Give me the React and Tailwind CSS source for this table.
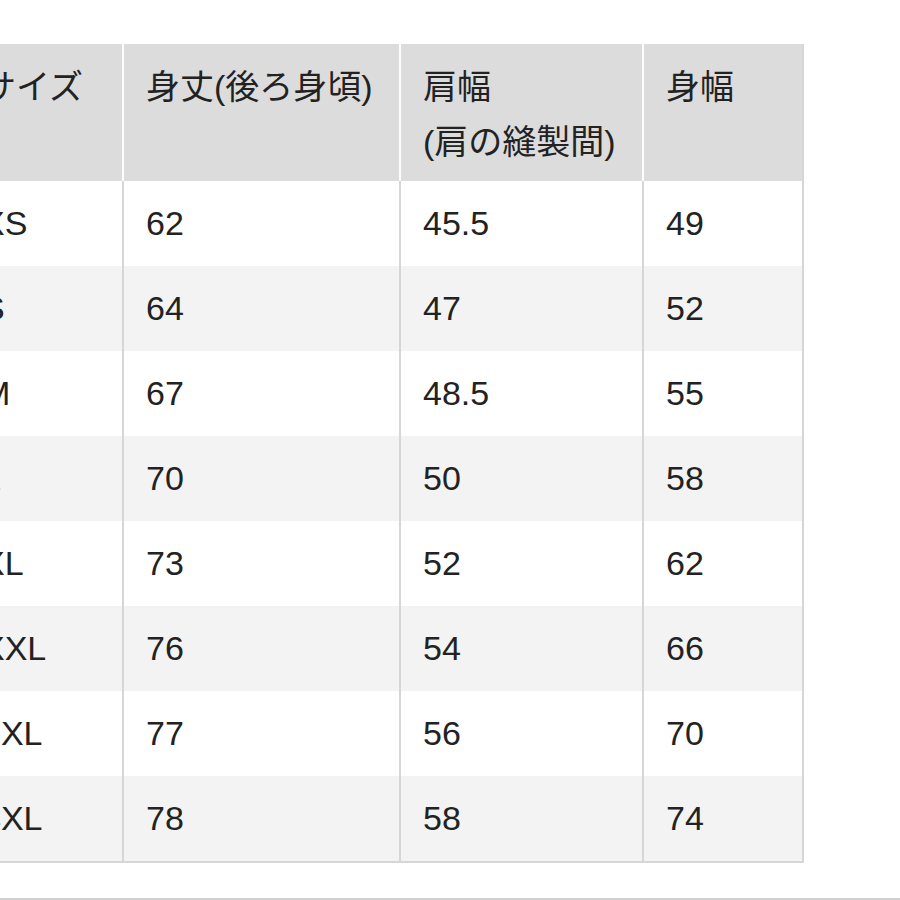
const headers = [
  ["サイズ"],
  ["身丈(後ろ身頃)"],
  ["肩幅", "(肩の縫製間)"],
  ["身幅"],
];

const rows = [
  ["XS", "62", "45.5", "49"],
  ["S", "64", "47", "52"],
  ["M", "67", "48.5", "55"],
  ["L", "70", "50", "58"],
  ["XL", "73", "52", "62"],
  ["XXL", "76", "54", "66"],
  ["3XL", "77", "56", "70"],
  ["4XL", "78", "58", "74"],
];

export default function App() {
  return (
    <div
      className="flex h-[900px] w-[900px] flex-col overflow-hidden bg-white text-[34px] text-[#222]"
      style={{ fontFamily: '"Liberation Sans", "Noto Sans CJK JP", sans-serif' }}
    >
      <div className="ml-[-41px] mt-[44px] w-fit border-b-2 border-r-2 border-[#d6d6d6]">
        <div className="grid grid-cols-[163px_277px_243px_160px]">
          {headers.map((lines, i) => (
            <div
              key={i}
              className={`h-[137px] bg-[#dcdcdc] pt-[16px] leading-[55px] ${
                i === 0 ? "pl-[23px]" : "border-l-2 border-white pl-[22px]"
              }`}
            >
              {lines.map((l) => (
                <div key={l}>{l}</div>
              ))}
            </div>
          ))}
          {rows.map((row, r) =>
            row.map((cell, i) => (
              <div
                key={`${r}-${i}`}
                className={`flex h-[85px] items-center ${
                  r % 2 === 1 ? "bg-[#f3f3f3]" : "bg-white"
                } ${i === 0 ? "pl-[23px]" : "border-l-2 border-[#d6d6d6] pl-[22px]"}`}
              >
                {cell}
              </div>
            ))
          )}
        </div>
      </div>
      <div className="mt-auto h-[2px] w-full bg-[#cfcfcf]" />
    </div>
  );
}
